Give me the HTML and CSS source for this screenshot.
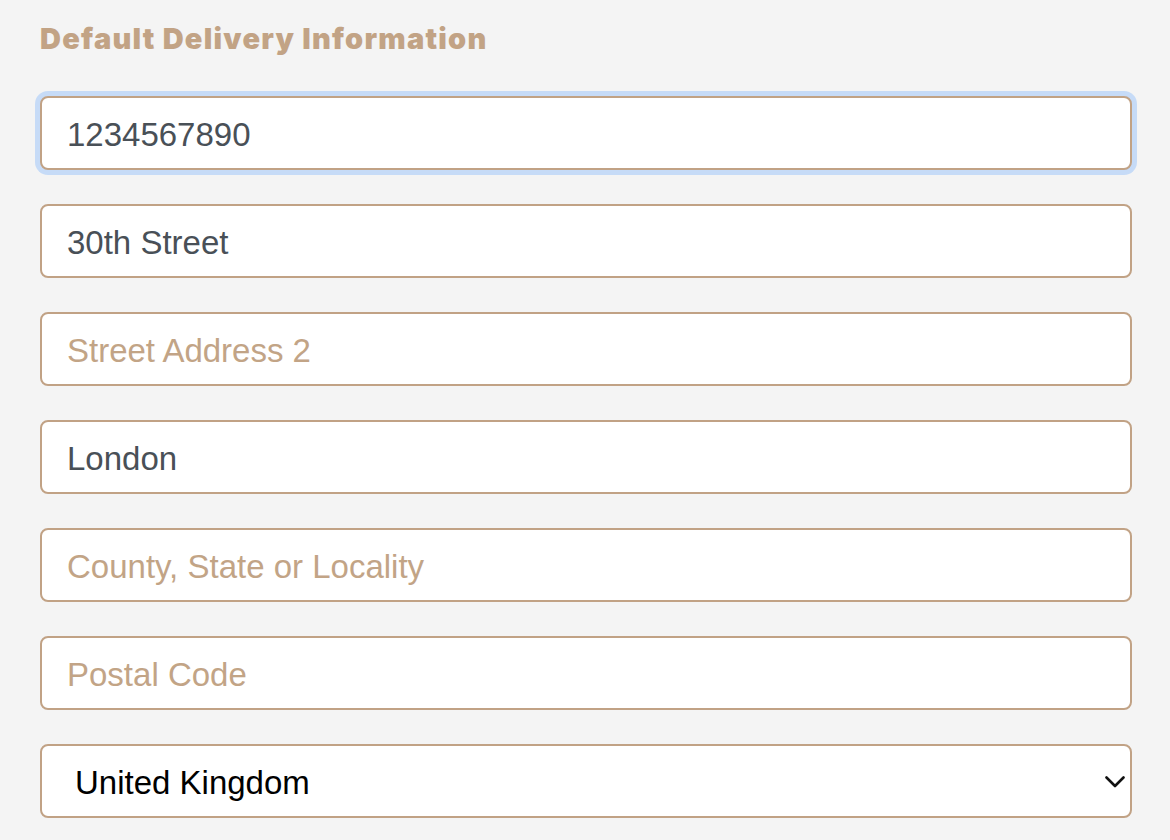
FILE: index.html
```html
<!DOCTYPE html>
<html lang="en">
<head>
<meta charset="utf-8">
<title>Default Delivery Information</title>
<link rel="stylesheet" href="styles.css">
</head>
<body>
<div class="panel">
  <h2 class="title">Default Delivery Information</h2>
  <form class="fields">
    <input class="field is-focused" type="text" value="1234567890">
    <input class="field" type="text" value="30th Street">
    <input class="field" type="text" placeholder="Street Address 2">
    <input class="field" type="text" value="London">
    <input class="field" type="text" placeholder="County, State or Locality">
    <input class="field" type="text" placeholder="Postal Code">
    <div class="select-wrap">
      <select class="field select">
        <option>United Kingdom</option>
        <option>United States</option>
      </select>
      <svg class="chevron" width="20" height="12" viewBox="0 0 20 12" aria-hidden="true">
        <path d="M1.5 1.5 L10 10 L18.5 1.5" fill="none" stroke="#111" stroke-width="2.6" stroke-linecap="round" stroke-linejoin="round"/>
      </svg>
    </div>
  </form>
</div>
</body>
</html>
```
FILE: styles.css
```css
html, body {
  margin: 0;
  padding: 0;
  background: #f4f4f4;
}

.panel {
  padding: 21px 0 0 40px;
  width: 1092px;
  font-family: "Liberation Sans", Arial, sans-serif;
}

.title {
  margin: 0 0 39px 0;
  font-family: Inter, "Liberation Sans", Arial, sans-serif;
  font-size: 29px;
  line-height: 36px;
  font-weight: 900;
  letter-spacing: 1.25px;
  color: #c2a385;
}

.fields {
  display: flex;
  flex-direction: column;
  gap: 34px;
  margin: 0;
}

.field {
  box-sizing: border-box;
  width: 1092px;
  height: 74px;
  margin: 0;
  padding: 3px 25px 0 25px;
  border: 2px solid #c1a285;
  border-radius: 8px;
  background: #fff;
  font-family: "Liberation Sans", Arial, sans-serif;
  font-size: 33px;
  color: #495057;
  outline: none;
}

.field::placeholder {
  color: #c2a486;
  opacity: 1;
}

.is-focused {
  box-shadow: 0 0 0 5px #c6dbf7;
}

.select-wrap {
  position: relative;
  width: 1092px;
}

.select {
  -webkit-appearance: none;
  appearance: none;
  padding-left: 33px;
  color: #000;
}

.chevron {
  position: absolute;
  right: 7px;
  top: 32px;
}
```
